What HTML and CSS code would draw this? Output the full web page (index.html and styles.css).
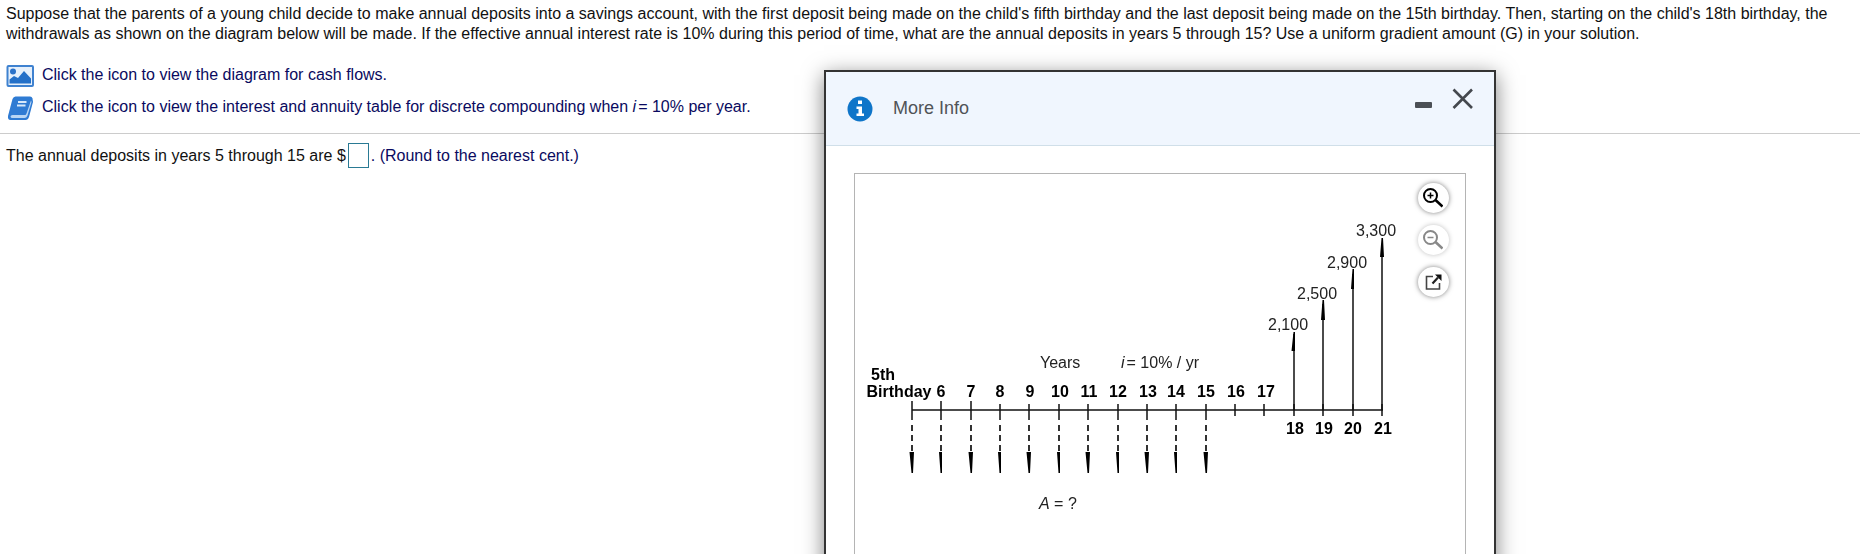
FILE: index.html
```html
<!DOCTYPE html>
<html lang="en">
<head>
  <meta charset="UTF-8">
  <title>Annual Deposits</title>
  <link rel="stylesheet" href="styles.css">
</head>
<body>

<main>
  <!-- Question -->
  <section class="question">
    <p class="prompt">Suppose that the parents of a young child decide to make annual deposits into a savings account, with the first deposit being made on the child's fifth birthday and the last deposit being made on the 15th birthday. Then, starting on the child's 18th birthday, the withdrawals as shown on the diagram below will be made. If the effective annual interest rate is 10% during this period of time, what are the annual deposits in years 5 through 15? Use a uniform gradient amount (G) in your solution.</p>

    <a class="resource" href="#moreInfo">
      <svg class="resource-icon" viewBox="0 0 28 24">
        <rect x="1.500" y="2" width="25.500" height="20" rx="1" fill="#e6f0fb" stroke="#3f82d0" stroke-width="2"/>
        <circle cx="7" cy="7.500" r="3" fill="#2b72c9"/>
        <path d="M3.500 19.500V15.500L8 12L12 14L18 7L25 14.500V19.500Z" fill="#2470c8"/>
      </svg>
      <span>Click the icon to view the diagram for cash flows.</span>
    </a>
    <a class="resource" href="#table">
      <svg class="resource-icon" viewBox="0 0 28 24">
        <path d="M9.500 0.500H24Q26 0.500 26.500 2.500L27 6L23 21Q22 24 19.500 24H4.500Q1.500 24 2 20L6.500 3Q7.500 0.500 9.500 0.500Z" fill="#2f7bd3"/>
        <path d="M4.500 20.500Q4.500 19 6.500 19H19.500L20.500 17.500L25 4.500L25.500 6L21.500 19.500Q20.500 22 18.500 22H6.500Q4.500 22 4.500 20.500Z" fill="#b9d6f4"/>
        <path d="M12 6H20.500M11 9.500H19.500" stroke="#d8e9fa" stroke-width="1.800"/>
      </svg>
      <span>Click the icon to view the interest and annuity table for discrete compounding when <i class="rate">i</i>= 10% per year.</span>
    </a>
  </section>

  <!-- Answer -->
  <section class="answer">
    <label for="deposit">The annual deposits in years 5 through 15 are $</label><input type="text" id="deposit" class="answer-box"><span class="hint">. (Round to the nearest cent.)</span>
  </section>
</main>

<!-- More Info window -->
<div class="dialog" id="moreInfo" role="dialog" aria-labelledby="dialogTitle">
  <header class="dialog-header">
    <svg class="info-icon" viewBox="0 0 26 26">
      <circle cx="13" cy="13" r="12.500" fill="#0f75c9"/>
      <path d="M11 4.500H15V8H11ZM9.500 10.500H15V17.500H17V20H9.500V17.500H11.500V13H9.500Z" fill="#fff"/>
    </svg>
    <h2 id="dialogTitle">More Info</h2>
    <button class="window-btn" aria-label="Minimize">
      <svg viewBox="0 0 22 22"><rect x="2" y="14" width="17" height="6" rx="1" fill="#4b4f55"/></svg>
    </button>
    <button class="window-btn" aria-label="Close">
      <svg viewBox="0 0 22 22"><path d="M1.500 1.500L20 20M20 1.500L1.500 20" stroke="#44484e" stroke-width="2.600" fill="none"/></svg>
    </button>
  </header>

  <div class="dialog-body">
    <div class="figure">
      <svg class="diagram" viewBox="0 0 560 400">
        <!-- time axis -->
        <path class="axis" d="M57 236H528"/>
        <path class="axis" d="M57 227V246M86 227V246M116 227V246M145 230V246M174 230V246M204 230V246M233 230V246M263 230V246M292 230V246M321 230V246M351 230V246M380 230V242M409 230V242M439 230V242M468 230V242M498 230V242M527 230V242"/>

        <!-- deposits -->
        <path class="dash" d="M57 251V278M86 251V278M116 251V278M145 251V278M174 251V278M204 251V278M233 251V278M263 251V278M292 251V278M321 251V278M351 251V278"/>
        <path d="M54.500 278H59L58 299H56.500ZM113.500 278H118L117 299H115.500ZM171.500 278H176L175 299H173.500ZM230.500 278H235L234 299H232.500ZM289.500 278H294L293 299H291.500ZM348.500 278H353L352 299H350.500Z"/>
        <path d="M84 278H87V299H85.500ZM143 278H146V299H144.500ZM202 278H205V299H203.500ZM261 278H264V299H262.500ZM319 278H322V299H320.500Z"/>

        <!-- withdrawals -->
        <path class="axis" d="M439 160V236M468 130V236M498 100V236M527 70V236"/>
        <path d="M438.500 158H440V177H436.500ZM467.500 126H469L470 146H466ZM497.500 95H499V115H496ZM526.500 64H528L529 83H525Z"/>

        <g class="amounts">
          <text x="413" y="156">2,100</text>
          <text x="442" y="125">2,500</text>
          <text x="472" y="94">2,900</text>
          <text x="501" y="62">3,300</text>
          <text x="185" y="194">Years</text>
          <text x="266" y="194"><tspan class="var">i</tspan><tspan dx="2">= 10% / yr</tspan></text>
          <text x="184" y="335"><tspan class="var">A</tspan> = ?</text>
        </g>

        <g class="years">
          <text x="28" y="206">5th</text>
          <text x="44" y="223">Birthday</text>
          <text x="86" y="223">6</text>
          <text x="116" y="223">7</text>
          <text x="145" y="223">8</text>
          <text x="175" y="223">9</text>
          <text x="205" y="223">10</text>
          <text x="234" y="223">11</text>
          <text x="263" y="223">12</text>
          <text x="293" y="223">13</text>
          <text x="321" y="223">14</text>
          <text x="351" y="223">15</text>
          <text x="381" y="223">16</text>
          <text x="411" y="223">17</text>
          <text x="440" y="260">18</text>
          <text x="469" y="260">19</text>
          <text x="498" y="260">20</text>
          <text x="528" y="260">21</text>
        </g>
      </svg>

      <div class="tools">
        <button class="tool-btn" aria-label="Zoom in">
          <svg viewBox="0 0 20 20" fill="none" stroke="#000">
            <circle cx="7.500" cy="7.500" r="6.500" stroke-width="2"/>
            <path d="M12.500 12L19.500 18.500" stroke-width="2.600"/>
            <path d="M4.500 7.500H10.500M7.500 4.500V10.500" stroke-width="1.500"/>
          </svg>
        </button>
        <button class="tool-btn" aria-label="Zoom out" disabled>
          <svg viewBox="0 0 20 20" fill="none" stroke="#888">
            <circle cx="7.500" cy="7.500" r="6.500" stroke-width="2"/>
            <path d="M12.500 12L19.500 18.500" stroke-width="2.600"/>
            <path d="M4.500 7.500H10.500" stroke-width="1.500"/>
          </svg>
        </button>
        <button class="tool-btn" aria-label="Open in new window">
          <svg viewBox="0 0 20 20" fill="none" stroke="#444" stroke-width="1.600">
            <path d="M10 4.500H3.500V17H16.500V11"/>
            <path d="M9.500 11.500L15 5.500" stroke="#222" stroke-width="2.200"/>
            <path d="M12 2.500H18.500V9Z" fill="#111" stroke="none"/>
          </svg>
        </button>
      </div>
    </div>
  </div>
</div>

</body>
</html>
```

FILE: styles.css
```css
* { box-sizing: border-box; }

body {
  margin: 0;
  font-family: "Liberation Sans", Arial, sans-serif;
  font-size: 16px;
  line-height: 20px;
  color: #111;
  background: #fff;
}

.question {
  padding: 4px 0 9px 6px;
  border-bottom: 1px solid #ccc;
}

.prompt {
  margin: 0 0 16px;
}

.resource {
  display: flex;
  align-items: center;
  gap: 8px;
  height: 32px;
  color: #0a0a60;
  text-decoration: none;
}

.resource span {
  padding-bottom: 2px;
}

.rate {
  margin-right: 2px;
}

.resource-icon {
  width: 28px;
  height: 24px;
}

.answer {
  display: flex;
  align-items: center;
  padding: 9px 6px;
}

.answer-box {
  width: 21px;
  height: 25px;
  margin: 0 2px;
  padding: 1px;
  border: 1px solid #2a7a94;
  font: inherit;
}

.hint {
  color: #0a0a60;
}

.dialog {
  position: fixed;
  top: 70px;
  left: 824px;
  width: 672px;
  background: #fff;
  border: 2px solid #333;
  box-shadow: 0 5px 20px rgba(0, 0, 0, 0.5);
}

.dialog-header {
  display: flex;
  align-items: flex-start;
  height: 74px;
  padding: 16px 20px 0 21px;
  background: #f0f6fe;
  border-bottom: 1px solid #d0dfe9;
}

.dialog-header h2 {
  flex: 1;
  margin: 8px 0 0 20px;
  font-size: 18px;
  line-height: 24px;
  font-weight: normal;
  color: #505357;
}

.info-icon {
  width: 26px;
  height: 26px;
  margin-top: 8px;
}

.window-btn {
  width: 22px;
  height: 22px;
  margin-left: 17px;
  padding: 0;
  border: none;
  background: none;
  cursor: pointer;
}

.window-btn svg {
  display: block;
}

.dialog-body {
  padding: 27px 28px;
}

.figure {
  display: flex;
  justify-content: space-between;
  border: 1px solid #b4b4b4;
}

.diagram {
  width: 560px;
  height: 400px;
}

.axis {
  fill: none;
  stroke: #111;
  stroke-width: 1.5;
}

.dash {
  fill: none;
  stroke: #000;
  stroke-width: 1.6;
  stroke-dasharray: 6 4;
}

.amounts {
  fill: #222;
}

.years {
  font-weight: bold;
  text-anchor: middle;
}

.var {
  font-style: italic;
}

.tools {
  display: flex;
  flex-direction: column;
  gap: 12px;
  padding: 9px 16px 0 0;
}

.tool-btn {
  display: flex;
  align-items: center;
  justify-content: center;
  width: 31px;
  height: 30px;
  padding: 0 2px 0 0;
  border: none;
  border-radius: 50%;
  background: #fff;
  box-shadow: 0 0 5px rgba(0, 0, 0, 0.5);
  cursor: pointer;
}

.tool-btn svg {
  width: 20px;
  height: 20px;
}

.tool-btn:disabled {
  box-shadow: 0 0 5px rgba(0, 0, 0, 0.25);
}
```
